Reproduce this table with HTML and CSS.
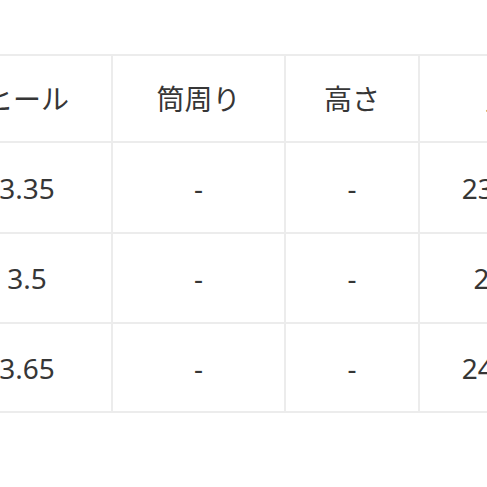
FILE: index.html
```html
<!DOCTYPE html>
<html lang="ja">
<head>
<meta charset="utf-8">
<link rel="stylesheet" href="styles.css">
</head>
<body>
<div class="wrap">
<table class="size-table">
<colgroup>
<col class="c1"><col class="c2"><col class="c3"><col class="c4">
</colgroup>
<thead>
<tr class="head"><th>ヒール</th><th>筒周り</th><th>高さ</th><th>足長</th></tr>
</thead>
<tbody>
<tr class="row r1"><td>3.35</td><td>-</td><td>-</td><td>23.5 cm</td></tr>
<tr class="row r2"><td>3.5</td><td>-</td><td>-</td><td>24 cm</td></tr>
<tr class="row r3"><td>3.65</td><td>-</td><td>-</td><td>24.5 cm</td></tr>
</tbody>
</table>
</div>
</body>
</html>
```
FILE: styles.css
```css
html, body {
  margin: 0;
  padding: 0;
  background: #fff;
}
body {
  width: 487px;
  height: 487px;
  overflow: hidden;
  font-family: "Noto Sans", "Noto Sans CJK JP", sans-serif;
  color: #363636;
}
.wrap {
  padding-top: 54px;
}
.size-table {
  margin-left: -59px;
  border-collapse: collapse;
  table-layout: fixed;
  width: 665px;
}
.c1 { width: 170px; }
.c2 { width: 173px; }
.c3 { width: 134px; }
.c4 { width: 188px; }
.size-table th,
.size-table td {
  border: 2px solid #ececec;
  text-align: center;
  vertical-align: middle;
  font-size: 28px;
  font-weight: 400;
  padding: 0;
  line-height: 1;
  white-space: nowrap;
}
.head { height: 87px; }
.r1 { height: 91px; }
.r2 { height: 90px; }
.r3 { height: 89px; }
```
